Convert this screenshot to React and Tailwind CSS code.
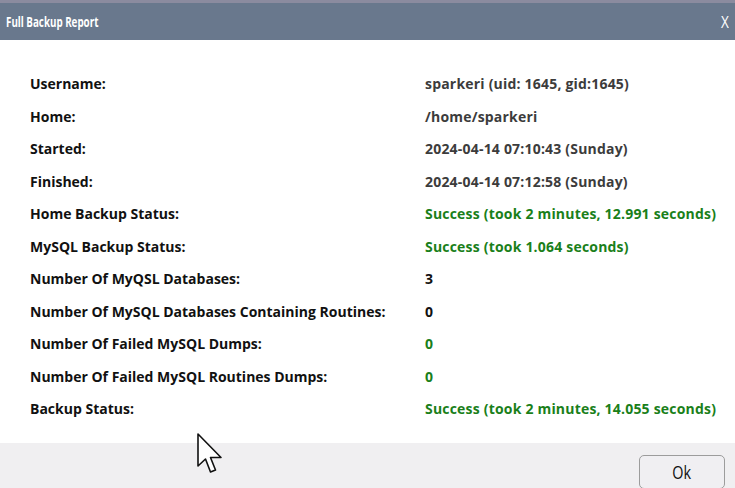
import React from 'react';

const rows = [
  { label: 'Username:', value: 'sparkeri (uid: 1645, gid:1645)', tone: 'gray' },
  { label: 'Home:', value: '/home/sparkeri', tone: 'gray' },
  { label: 'Started:', value: '2024-04-14 07:10:43 (Sunday)', tone: 'gray' },
  { label: 'Finished:', value: '2024-04-14 07:12:58 (Sunday)', tone: 'gray' },
  { label: 'Home Backup Status:', value: 'Success (took 2 minutes, 12.991 seconds)', tone: 'green' },
  { label: 'MySQL Backup Status:', value: 'Success (took 1.064 seconds)', tone: 'green' },
  { label: 'Number Of MyQSL Databases:', value: '3', tone: 'black' },
  { label: 'Number Of MySQL Databases Containing Routines:', value: '0', tone: 'black' },
  { label: 'Number Of Failed MySQL Dumps:', value: '0', tone: 'green' },
  { label: 'Number Of Failed MySQL Routines Dumps:', value: '0', tone: 'green' },
  { label: 'Backup Status:', value: 'Success (took 2 minutes, 14.055 seconds)', tone: 'green' },
];

const toneClass = {
  gray: 'text-[#3c3c3c]',
  green: 'text-[#1a7f1a]',
  black: 'text-[#111]',
};

function Cursor() {
  return (
    <svg className="absolute left-[196px] top-[432px]" width="30" height="44" viewBox="0 0 30 44">
      <path
        d="M2 2 L2 34 L9.5 27 L14.5 40 L19.5 38 L14.5 25.5 L25 25.5 Z"
        fill="#fff"
        stroke="#111"
        strokeWidth="1.6"
        strokeLinejoin="round"
      />
    </svg>
  );
}

export default function App() {
  return (
    <div className="relative h-[488px] w-[735px] overflow-hidden bg-white font-['Open_Sans',sans-serif]">
      <div className="h-[3px] bg-[#8b8b9f]" />
      <div className="flex h-[37px] items-center justify-between bg-[#69788d] pl-[6px] pr-[6px] text-white">
        <span className="origin-left scale-x-[0.7] text-[14px] font-bold">Full Backup Report</span>
        <span className="origin-right scale-x-[0.8] text-[17px]">X</span>
      </div>
      <div className="h-[403px] pl-[30px] pt-[27.5px]">
        {rows.map((r) => (
          <div key={r.label} className="grid h-[32.5px] grid-cols-[395px_1fr] items-center text-[14px] font-bold">
            <span className="text-[#111]">{r.label}</span>
            <span className={`tracking-[0.2px] ${toneClass[r.tone]}`}>{r.value}</span>
          </div>
        ))}
      </div>
      <div className="flex h-[45px] justify-end bg-[#f0eff1] pr-[10px] pt-[12px]">
        <button className="h-[34px] w-[86px] rounded-[5px] border border-[#9c9c9c] bg-[#f0eff2] text-[#111]">
          <span className="inline-block scale-x-[0.8] text-[18px]">Ok</span>
        </button>
      </div>
      <Cursor />
    </div>
  );
}
